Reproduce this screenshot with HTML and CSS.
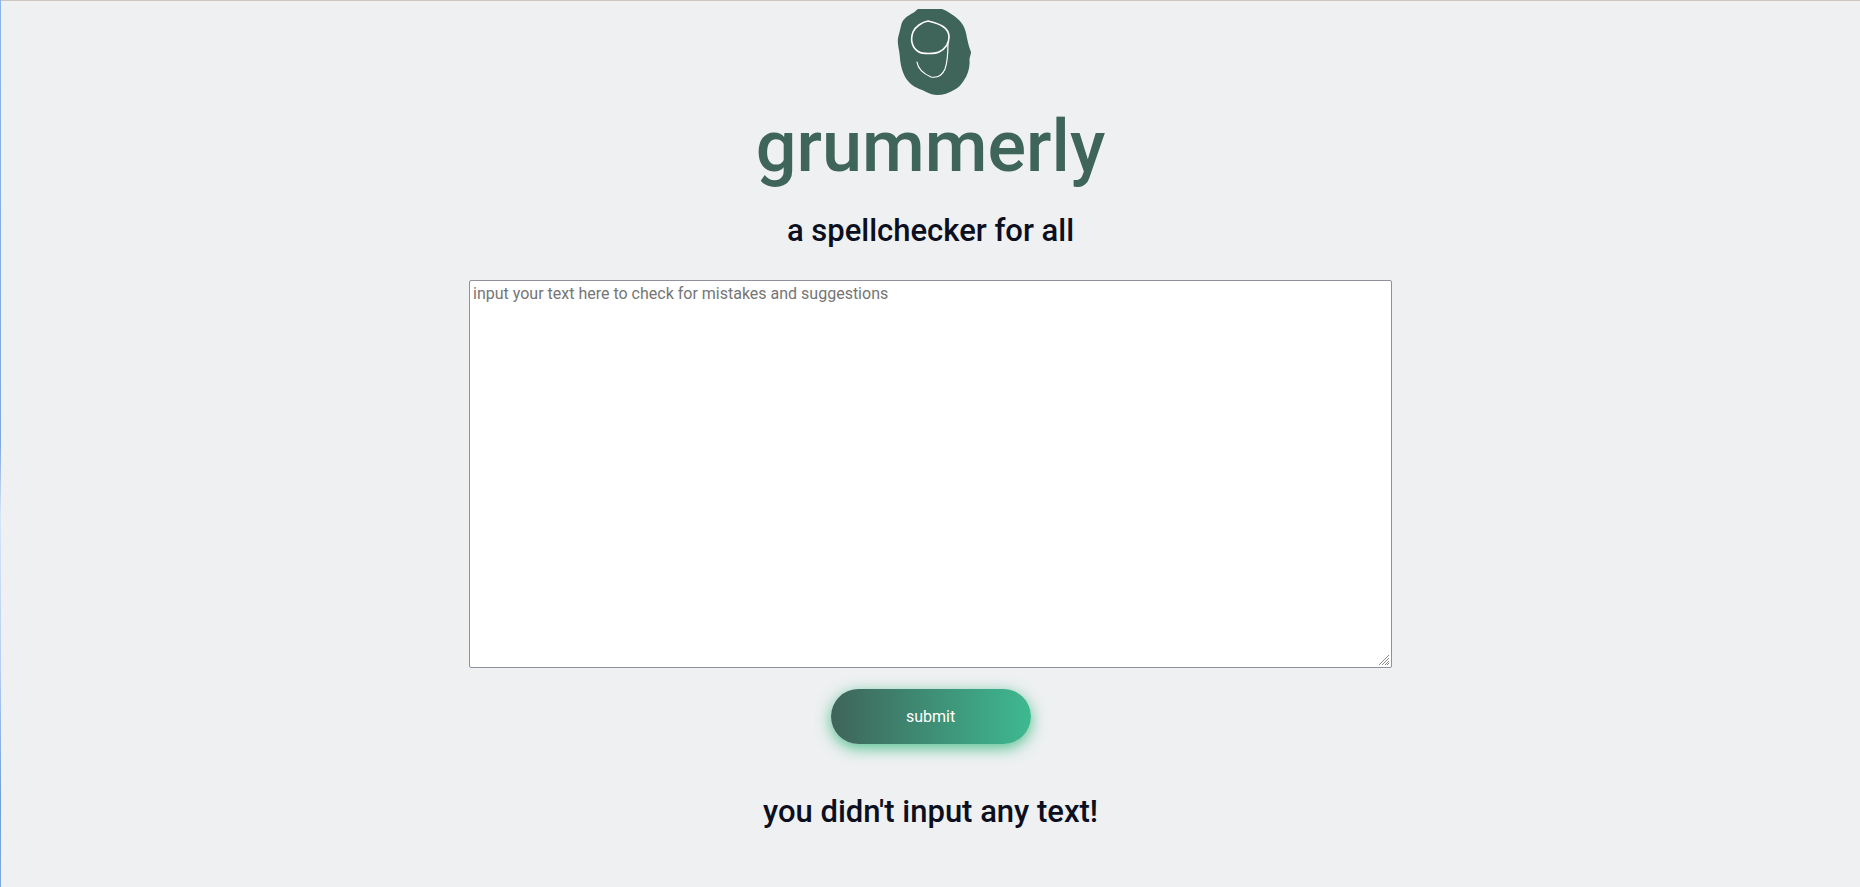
FILE: index.html
```html
<!DOCTYPE html>
<html lang="en">
<head>
<meta charset="utf-8">
<title>grummerly</title>
<link rel="stylesheet" href="styles.css">
</head>
<body>
<main class="page">
  <svg class="logo" viewBox="0 1 110 104" role="img" aria-label="grummerly logo">
    <path class="logo-blob" d="M38 9 L62 9 C67 11 74 15 79 20 C84 25 86 31 87 38 C88 43 89 47 91 52 C91 54 90 56 89.500 59 C90 65 89 71 86 77 C83 82 80 87 74 90 C69 93 63 95 57 95 C51 95 47 92 42 90 C37 88 32 86 28 81 C23 75 21 67 20 59 C20 52 17 44 18 38 C19 34 20 30 21 26 C22 20 26 17 31 14 C34 13 35 11 38 9 Z"/>
    <path class="logo-line" d="M48 21 C42 22 35 27 33 32 C30 40 32 48 39 52 C42 54 55 54 59 52 C65 49 69 45 69 37 C69 28 61 24 48 21 Z"/>
    <path class="logo-tail" d="M68 42 C68 52 68 61 65 69 C62 76 57 78 51 77 C44 74 38 69 37 62"/>
  </svg>
  <h1 class="title">grummerly</h1>
  <h2 class="tagline">a spellchecker for all</h2>
  <form class="checker" onsubmit="return false">
    <textarea class="input" aria-label="text to check" placeholder="input your text here to check for mistakes and suggestions"></textarea>
    <button class="submit" type="submit">submit</button>
  </form>
  <p class="message" role="status">you didn't input any text!</p>
</main>
</body>
</html>
```

FILE: styles.css
```css
* { box-sizing: border-box; }

body {
  margin: 0;
  min-height: 100vh;
  background: #eef0f2;
  color: #0b0f20;
  font-family: Roboto, sans-serif;
  border-left: 1px solid;
  border-image: linear-gradient(#8cb6ea, #7fa9dc 50%, #d5e5f8 58%, #b4cff2 75%, #6f9fd8 90%, #7da9df) 1;
}

.page {
  display: flex;
  flex-direction: column;
  align-items: center;
  border-top: 1px solid #d0c6c0;
}

.logo {
  width: 110px;
  height: 104px;
  margin-left: 8px;
}

.logo-blob { fill: #3f6459; }

.logo-line,
.logo-tail {
  fill: none;
  stroke: #fff;
  stroke-width: 1.6;
  stroke-linecap: round;
}

.logo-tail { stroke-width: 1.2; }

.title {
  margin: 0;
  font-size: 72px;
  line-height: 84px;
  font-weight: 500;
  color: #3f6459;
}

.tagline,
.message {
  margin: 24px 0 31px;
  font-size: 31px;
  line-height: 36px;
  font-weight: 500;
}

.message { margin-top: 29px; }

.checker {
  display: flex;
  flex-direction: column;
  align-items: center;
  width: 100%;
}

.input {
  width: 923px;
  max-width: 96%;
  height: 388px;
  padding: 3px;
  border: 1px solid #8f8f9d;
  border-radius: 2px;
  background: #fff;
  color: inherit;
  font: 16px/19px Roboto, sans-serif;
}

.input::placeholder { color: #757575; }

.input::-webkit-resizer {
  background: url("data:image/svg+xml,%3Csvg xmlns='http://www.w3.org/2000/svg' width='15' height='15' fill='none' stroke='%23888'%3E%3Cpath d='M3 13L13 3M6 13L13 6M9 13L13 9M11 13L13 11' /%3E%3C/svg%3E") no-repeat right bottom;
}

.submit {
  width: 200px;
  height: 55px;
  margin: 21px 0;
  border: 0;
  border-radius: 50px;
  background: linear-gradient(90deg, #3f6459, #3eb991);
  box-shadow: 0 4px 15px rgba(55, 185, 125, 0.85);
  color: #fff;
  font: 400 16px/19px Roboto, sans-serif;
  cursor: pointer;
}
```
